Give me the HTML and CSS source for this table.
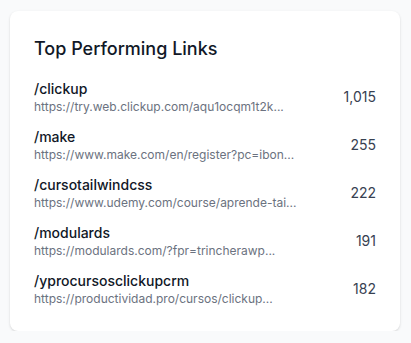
FILE: index.html
```html
<!DOCTYPE html>
<html>
<head>
<meta charset="utf-8">
<link rel="stylesheet" href="styles.css">
</head>
<body>
<div class="card">
  <h2 class="title">Top Performing Links</h2>
  <ul class="list">
    <li class="item">
      <div class="info"><div class="name">/clickup</div><div class="url">https://try.web.clickup.com/aqu1ocqm1t2k...</div></div>
      <div class="count">1,015</div>
    </li>
    <li class="item">
      <div class="info"><div class="name">/make</div><div class="url">https://www.make.com/en/register?pc=ibon...</div></div>
      <div class="count">255</div>
    </li>
    <li class="item">
      <div class="info"><div class="name">/cursotailwindcss</div><div class="url">https://www.udemy.com/course/aprende-tai...</div></div>
      <div class="count">222</div>
    </li>
    <li class="item">
      <div class="info"><div class="name">/modulards</div><div class="url">https://modulards.com/?fpr=trincherawp...</div></div>
      <div class="count">191</div>
    </li>
    <li class="item">
      <div class="info"><div class="name">/yprocursosclickupcrm</div><div class="url">https://productividad.pro/cursos/clickup...</div></div>
      <div class="count">182</div>
    </li>
  </ul>
</div>
</body>
</html>
```
FILE: styles.css
```css
html, body { margin: 0; }
body {
  background: #f9fafb;
  font-family: Inter, "Noto Sans", sans-serif;
  padding: 11px 11px 0 10px;
  color: #111827;
}
.card {
  background: #fff;
  border-radius: 8px;
  box-shadow: 0 1px 3px rgba(0,0,0,0.1), 0 1px 2px rgba(0,0,0,0.06);
  padding: 24px;
  width: 390px;
  box-sizing: border-box;
}
.title {
  margin: 0 0 16px;
  font-size: 18px;
  line-height: 28px;
  font-weight: 500;
  color: #111827;
}
.list {
  list-style: none;
  margin: 0;
  padding: 0;
  display: flex;
  flex-direction: column;
  gap: 12px;
}
.item {
  display: flex;
  justify-content: space-between;
  align-items: center;
}
.name {
  font-size: 14px;
  line-height: 20px;
  font-weight: 500;
  color: #111827;
}
.url {
  font-size: 12px;
  line-height: 16px;
  color: #6b7280;
}
.count {
  font-size: 14px;
  line-height: 20px;
  font-weight: 400;
  color: #374151;
}
```
